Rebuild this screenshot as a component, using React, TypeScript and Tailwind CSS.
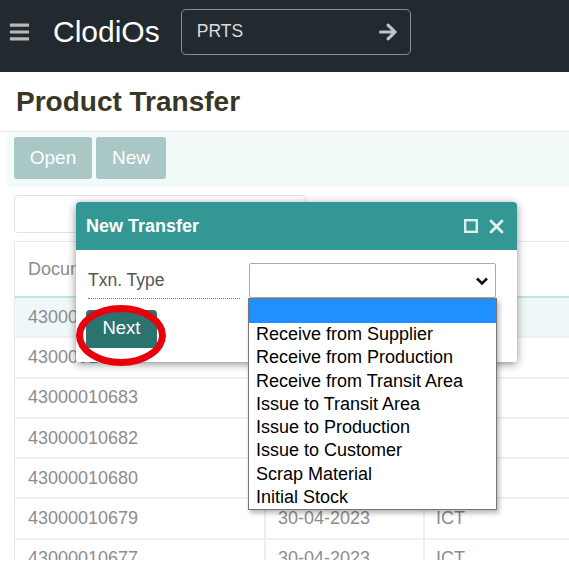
import React from "react";
import { FaBars, FaArrowRight } from "react-icons/fa";

const rows = [
  { id: "43000010685", date: "30-04-2023", t: "ICT", hl: true },
  { id: "43000010684", date: "30-04-2023", t: "ICT" },
  { id: "43000010683", date: "30-04-2023", t: "ICT" },
  { id: "43000010682", date: "30-04-2023", t: "ICT" },
  { id: "43000010680", date: "30-04-2023", t: "ICT" },
  { id: "43000010679", date: "30-04-2023", t: "ICT" },
  { id: "43000010677", date: "30-04-2023", t: "ICT" },
];

const options = [
  "Receive from Supplier",
  "Receive from Production",
  "Receive from Transit Area",
  "Issue to Transit Area",
  "Issue to Production",
  "Issue to Customer",
  "Scrap Material",
  "Initial Stock",
];

export default function App() {
  return (
    <div
      className="w-[569px] h-[580px] bg-white overflow-hidden relative"
      style={{ fontFamily: '"Liberation Sans", Arial, sans-serif' }}
    >
      <div className="h-[560px] overflow-hidden relative">
        {/* Header */}
        <div className="h-[72px] bg-[#222a30] flex items-center pb-[9px]">
          <FaBars className="ml-[7px] text-[#b9b9b9] w-[25px] h-[22px]" />
          <span className="ml-[21px] text-white text-[30px] leading-none">ClodiOs</span>
          <div className="ml-[21px] w-[230px] h-[46px] border border-[#8a8f93] rounded-[5px] flex items-center justify-between pl-[15px] pr-[11px]">
            <span className="text-[17.5px] text-[#dcdcdc]">PRTS</span>
            <FaArrowRight className="text-[#c4c4c4] w-[22px] h-[20px]" />
          </div>
        </div>

        {/* Title */}
        <div className="h-[59px] pl-[16px] pt-[16px]">
          <h1 className="text-[28px] font-bold leading-none text-[#3a3626]">Product Transfer</h1>
        </div>
        <div className="h-[1px] bg-[#e6e6e6]" />

        {/* Toolbar */}
        <div className="h-[55px] bg-[#f3fafa] ml-[7px] flex items-start pt-[5px] pl-[7px] gap-[4px]">
          <button className="w-[78px] h-[42px] bg-[#a8c7c5] rounded-[3px] text-white text-[19px]">Open</button>
          <button className="w-[70px] h-[42px] bg-[#a8c7c5] rounded-[3px] text-white text-[19px]">New</button>
        </div>

        {/* Search */}
        <div className="pl-[14px] pt-[8px]">
          <div className="w-[292px] h-[38px] border border-[#e2e2e2] rounded-[3px] bg-white" />
        </div>

        {/* Table */}
        <div className="ml-[14px] mt-[8px] border-l border-t border-[#e8e8e8] text-[18px] text-[#8d8d8d]">
          <div className="h-[56px] grid grid-cols-[249px_159px_1fr] items-center border-b-2 border-[#bfe6e6]">
            <div className="pl-[13px]">Document No.</div>
            <div className="pl-[12px] h-full flex items-center border-l border-[#eee]">Date</div>
            <div className="pl-[11px] h-full flex items-center border-l border-[#eee]">Type</div>
          </div>
          {rows.map((r, i) => (
            <div
              key={i}
              className={`h-[40.3px] grid grid-cols-[249px_159px_1fr] border-b-2 border-[#f0f0f0] ${r.hl ? "bg-[#eff8f8]" : "bg-white"}`}
            >
              <div className="pl-[13px] flex items-center">{r.id}</div>
              <div className="pl-[12px] flex items-center border-l-2 border-[#eee]">{r.date}</div>
              <div className="pl-[11px] flex items-center border-l-2 border-[#eee]">{r.t}</div>
            </div>
          ))}
        </div>

        {/* Modal */}
        <div className="absolute left-[76px] top-[202px] w-[441px] h-[160px] bg-white rounded-t-[4px] rounded-b-[2px] shadow-[0_2px_8px_rgba(0,0,0,0.45)]">
          <div className="h-[48px] bg-[#339793] rounded-t-[4px] flex items-center justify-between pl-[10px] pr-[13px]">
            <span className="text-white font-bold text-[18px]">New Transfer</span>
            <div className="flex items-center gap-[11px]">
              <svg width="14" height="14" viewBox="0 0 14 14">
                <rect x="1.2" y="1.2" width="11.6" height="11.6" fill="none" stroke="#dfeeed" strokeWidth="2.4" />
              </svg>
              <svg width="15" height="15" viewBox="0 0 15 15">
                <path d="M2 2 L13 13 M13 2 L2 13" stroke="#e6f1f0" strokeWidth="2.8" strokeLinecap="round" />
              </svg>
            </div>
          </div>
          <div className="flex items-start pt-[13px]">
            <div className="ml-[12px] w-[152px] h-[36px] border-b border-dotted border-[#777] flex items-center text-[17.5px] text-[#555]">
              Txn. Type
            </div>
            <div className="ml-[9px] w-[247px] h-[35px] border border-[#aaa] rounded-[2px] bg-white flex items-center justify-end pr-[6px]">
              <svg width="14" height="10" viewBox="0 0 14 10">
                <path d="M2 2.5 L7 7.5 L12 2.5" fill="none" stroke="#111" strokeWidth="2.6" />
              </svg>
            </div>
          </div>
          <div className="pl-[10px] pt-[11px]">
            <button className="w-[71px] h-[38px] bg-[#2b736e] rounded-[4px] text-white text-[18.5px] pb-[3px]">Next</button>
          </div>
        </div>

        {/* Red circle */}
        <div className="absolute left-[76px] top-[305px] w-[90px] h-[61px] rounded-[50%] border-[7px] border-[#e8000b]" />

        {/* Dropdown list */}
        <div className="absolute left-[248px] top-[298px] w-[249px] h-[212px] bg-white border border-[#767676] shadow-[2px_3px_5px_rgba(0,0,0,0.3)] text-[18px] text-black">
          <div className="h-[24px] bg-[#1e90ff]" />
          {options.map((o) => (
            <div key={o} className="h-[23.3px] leading-[23.3px] pl-[7px] whitespace-nowrap">
              {o}
            </div>
          ))}
        </div>
      </div>
    </div>
  );
}
